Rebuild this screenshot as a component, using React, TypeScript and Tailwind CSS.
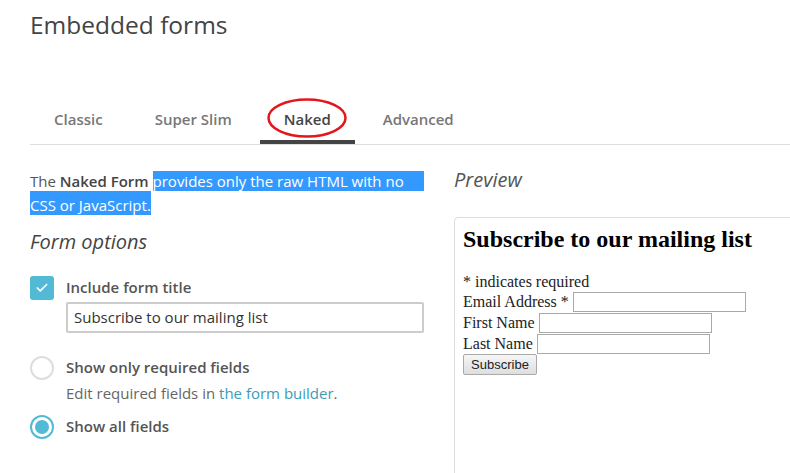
import { Check } from 'lucide-react';

const tabs = ['Classic', 'Super Slim', 'Naked', 'Advanced'];

const sans = { fontFamily: "'Open Sans', 'Noto Sans', sans-serif" };
const serif = { fontFamily: "'Liberation Serif', 'Times New Roman', serif" };

const App = () => {
  return (
    <div className="w-[790px] h-[473px] overflow-hidden bg-white text-[#555]" style={sans}>
      <div className="pl-[30px]">
        <h1 className="mt-[7px] text-[24.5px] leading-[35px] text-[#444] font-normal">Embedded forms</h1>

        <div className="relative mt-[67px] flex gap-[4px] border-b border-[#ddd]">
          {tabs.map((tab) => (
            <div
              key={tab}
              className={
                tab === 'Naked'
                  ? 'px-6 pb-[11px] text-[15px] leading-[20px] font-semibold text-[#444] border-b-4 border-[#444]'
                  : 'px-6 pb-[11px] text-[15px] leading-[20px] font-semibold text-[#777] border-b-4 border-transparent'
              }
            >
              {tab}
            </div>
          ))}
          <svg className="absolute left-[237px] top-[-11px]" width="82" height="44" viewBox="0 0 82 44" aria-hidden="true">
            <ellipse cx="40" cy="20" rx="38.5" ry="18.5" fill="none" stroke="#e3161b" strokeWidth="2.5" />
          </svg>
        </div>

        <div className="mt-[24px] flex gap-[30px]">
          <div className="w-[394px] shrink-0">
            <p className="w-[402px] text-[15px] leading-[24px]">
              The <span className="font-semibold text-[#444]">Naked Form</span>{' '}
              <span className="bg-[#3399ff] text-white">provides only the raw HTML with no</span>
              <span className="inline-block w-[20px] h-[20px] align-[-4px] bg-[#3399ff]" />{' '}
              <span className="bg-[#3399ff] text-white pt-[4px]">CSS or JavaScript.</span>
            </p>

            <h2 className="mt-[11px] text-[20px] leading-[28px] italic text-[#444]">Form options</h2>

            <div className="mt-[20px] flex gap-3">
              <div className="w-6 h-6 rounded-[3px] bg-[#52bad5] flex items-center justify-center shrink-0">
                <Check className="w-[14px] h-[14px] text-white" strokeWidth={3} />
              </div>
              <div className="flex-1">
                <div className="text-[15px] leading-[22px] font-semibold text-[#555]">Include form title</div>
                <div className="mt-[4px] h-[31px] border-2 border-[#ccc] rounded-[2px] px-[6px] flex items-center text-[15px] text-[#333]">
                  Subscribe to our mailing list
                </div>
              </div>
            </div>

            <div className="mt-[23px] flex gap-3">
              <div className="w-6 h-6 rounded-full border-2 border-[#ddd] shrink-0" />
              <div>
                <div className="text-[15px] leading-[22px] font-semibold text-[#555]">Show only required fields</div>
                <div className="mt-[4px] text-[15px] leading-[22px] text-[#666]">
                  Edit required fields in <span className="text-[#3c9cb5]">the form builder</span>.
                </div>
              </div>
            </div>

            <div className="mt-[11px] flex gap-3">
              <div className="w-6 h-6 rounded-full border-2 border-[#52bad5] shrink-0 flex items-center justify-center">
                <div className="w-[14px] h-[14px] rounded-full bg-[#52bad5]" />
              </div>
              <div className="text-[15px] leading-[22px] font-semibold text-[#555]">Show all fields</div>
            </div>
          </div>

          <div className="shrink-0">
            <h2 className="-mt-[3px] text-[20px] leading-[28px] italic text-[#555]">Preview</h2>
            <div className="mt-[23px] w-[400px] h-[300px] border border-[#ddd] rounded-tl-[4px] pt-[8px] px-[8px] text-black" style={serif}>
              <h3 className="text-[24px] font-bold leading-[27px]">Subscribe to our mailing list</h3>
              <div className="mt-[19px] text-[16px] leading-[19px] text-[#222]">
                <div>* indicates required</div>
                <div className="flex items-center h-[21px] gap-[4px]">
                  <span>Email Address *</span>
                  <span className="w-[173px] h-[20px] border border-[#aaa]" />
                </div>
                <div className="flex items-center h-[21px] gap-[4px]">
                  <span>First Name</span>
                  <span className="w-[173px] h-[20px] border border-[#aaa]" />
                </div>
                <div className="flex items-center h-[21px] gap-[4px]">
                  <span>Last Name</span>
                  <span className="w-[173px] h-[20px] border border-[#aaa]" />
                </div>
                <div className="h-[21px] flex items-center">
                  <span
                    className="w-[74px] h-[21px] border border-[#aaa] rounded-[2px] bg-gradient-to-b from-[#f6f6f6] to-[#dedede] text-[13px] text-[#222] flex items-center justify-center"
                    style={{ fontFamily: "'Liberation Sans', Arial, sans-serif" }}
                  >
                    Subscribe
                  </span>
                </div>
              </div>
            </div>
          </div>
        </div>
      </div>
    </div>
  );
};

export default App;
